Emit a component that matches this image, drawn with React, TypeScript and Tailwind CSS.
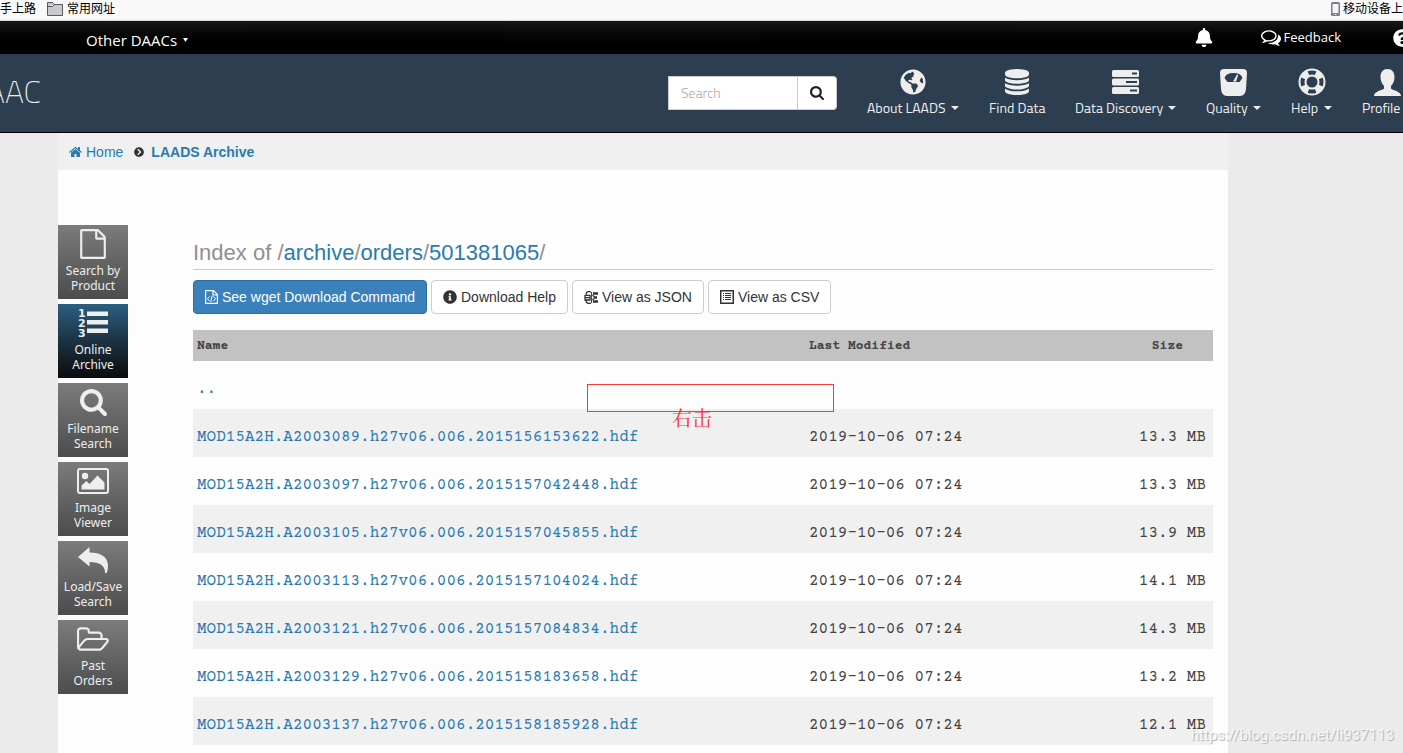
import type { ReactNode } from 'react';
import { FaBell, FaChevronCircleRight, FaGlobeAmericas, FaInfoCircle, FaQuestionCircle } from 'react-icons/fa';

const files = [
  ['MOD15A2H.A2003089.h27v06.006.2015156153622.hdf', '13.3 MB'],
  ['MOD15A2H.A2003097.h27v06.006.2015157042448.hdf', '13.3 MB'],
  ['MOD15A2H.A2003105.h27v06.006.2015157045855.hdf', '13.9 MB'],
  ['MOD15A2H.A2003113.h27v06.006.2015157104024.hdf', '14.1 MB'],
  ['MOD15A2H.A2003121.h27v06.006.2015157084834.hdf', '14.3 MB'],
  ['MOD15A2H.A2003129.h27v06.006.2015158183658.hdf', '13.2 MB'],
  ['MOD15A2H.A2003137.h27v06.006.2015158185928.hdf', '12.1 MB'],
];

const HomeIcon = () => (
  <svg viewBox="64 128 1664 1536" className="h-3 w-[13px]" fill="currentColor">
    <path d="M1472 992v480q0 26-19 45t-45 19h-384v-384h-256v384h-384q-26 0-45-19t-19-45v-480q0-1 .5-3t.5-3l575-474 575 474q1 2 1 6zm223-69l-62 74q-8 9-21 11h-3q-13 0-21-7l-692-577-692 577q-12 8-24 7-13-2-21-11l-62-74q-8-10-7-23.5t11-21.5l719-599q32-26 76-26t76 26l244 204v-195q0-14 9-23t23-9h192q14 0 23 9t9 23v408l219 182q10 8 11 21.5t-7 23.5z" />
  </svg>
);

const MagnifierIcon = ({ className }: { className: string }) => (
  <svg viewBox="64 128 1664 1664" className={className} fill="currentColor">
    <path d="M1216 832q0-185-131.5-316.5t-316.5-131.5-316.5 131.5-131.5 316.5 131.5 316.5 316.5 131.5 316.5-131.5 131.5-316.5zm512 832q0 52-38 90t-90 38q-54 0-90-38l-343-342q-179 124-399 124-143 0-273.5-55.5t-225-150-150-225-55.5-273.5 55.5-273.5 150-225 225-150 273.5-55.5 273.5 55.5 225 150 150 225 55.5 273.5q0 220-124 399l343 343q37 37 37 90z" />
  </svg>
);

const CommentsIcon = () => (
  <svg viewBox="0 256 1792 1408" className="h-4 w-5" fill="currentColor">
    <path d="M704 384q-153 0-286 52t-211.5 141-78.5 191q0 82 53 158t149 132l97 56-35 84q34-20 62-39l44-31 53 10q78 14 153 14 153 0 286-52t211.5-141 78.5-191-78.5-191-211.5-141-286-52zm0-128q191 0 353.5 68.5t256.5 186.5 94 257-94 257-256.5 186.5-353.5 68.5q-86 0-176-16-124 88-278 128-36 9-86 16h-3q-11 0-20.5-8t-11.5-21q-1-3-1-6.5t.5-6.5 2-6l2.5-5 3.5-5.5 4-5 4.5-5 4-4.5q5-6 23-25t26-29.5 22.5-29 25-38.5 20.5-44q-124-72-195-177t-71-224q0-139 94-257t256.5-186.5 353.5-68.5zm822 1169q10 24 20.5 44t25 38.5 22.5 29 26 29.5 23 25q1 1 4 4.5t4.5 5 4 5 3.5 5.5l2.5 5 2 6 .5 6.5-1 6.5q-3 14-13 22t-22 7q-50-7-86-16-154-40-278-128-90 16-176 16-271 0-472-132 58 4 88 4 161 0 309-45t264-129q125-92 192-212t67-254q0-77-23-152 129 71 204 178t75 230q0 120-71 224.5t-195 176.5z" />
  </svg>
);

const DatabaseIcon = () => (
  <svg viewBox="128 0 1536 1792" className="h-[26px] w-6" preserveAspectRatio="none" fill="currentColor">
    <path d="M896 768q237 0 443-43t325-127v170q0 69-103 128t-280 93.5-385 34.5-385-34.5-280-93.5-103-128v-170q119 84 325 127t443 43zm0 768q237 0 443-43t325-127v170q0 69-103 128t-280 93.5-385 34.5-385-34.5-280-93.5-103-128v-170q119 84 325 127t443 43zm0-384q237 0 443-43t325-127v170q0 69-103 128t-280 93.5-385 34.5-385-34.5-280-93.5-103-128v-170q119 84 325 127t443 43zm0-1152q208 0 385 34.5t280 93.5 103 128v128q0 69-103 128t-280 93.5-385 34.5-385-34.5-280-93.5-103-128v-128q0-69 103-128t280-93.5 385-34.5z" />
  </svg>
);

const TasksIcon = () => (
  <svg viewBox="0 0 27 26" className="h-[26px] w-[27px]" fill="currentColor">
    <rect y="1" width="27" height="7" rx="1.5" />
    <rect y="9.500" width="27" height="7" rx="1.500" />
    <rect y="18" width="27" height="7" rx="1.500" />
    <g fill="#2c3e50">
      <rect x="20" y="3.500" width="5" height="2" />
      <rect x="14" y="12" width="11" height="2" />
      <rect x="18" y="20.500" width="7" height="2" />
    </g>
  </svg>
);

const ScaleIcon = () => (
  <svg viewBox="0 0 27 27" className="size-[27px]">
    <path d="M4 0h19q4 0 4 4l-1 16q-.6 7-6 7H7q-5.400 0-6-7L0 4q0-4 4-4z" fill="currentColor" />
    <path d="M4.500 9Q6 4 13.500 4T22.500 9L19.500 13h-12z" fill="#2c3e50" />
    <path d="M13 12.500l4-7 1.200.6-2.200 6.400z" fill="currentColor" />
  </svg>
);

const LifeRingIcon = () => (
  <svg viewBox="0 0 28 28" className="size-7">
    <circle cx="14" cy="14" r="13.500" fill="currentColor" />
    <circle cx="14" cy="14" r="9.500" fill="none" stroke="#2c3e50" strokeWidth="4" pathLength="80" strokeDasharray="10 10" strokeDashoffset="5" />
    <circle cx="14" cy="14" r="5.500" fill="#2c3e50" />
  </svg>
);

const PersonIcon = () => (
  <svg viewBox="0 0 27 27" className="size-[27px]" fill="currentColor">
    <path d="M13.500 0C18 0 20.500 3 20.500 8c0 4-1.500 7-3.500 9v2.500c1 1.800 10 2.500 10 7.500H0c0-5 9-5.700 10-7.500V17c-2-2-3.500-5-3.500-9 0-5 2.500-8 7-8z" />
  </svg>
);

const FileIcon = () => (
  <svg viewBox="128 0 1536 1792" className="h-[30px] w-[26px]" fill="currentColor">
    <path d="M1596 380q28 28 48 76t20 88v1152q0 40-28 68t-68 28h-1344q-40 0-68-28t-28-68v-1600q0-40 28-68t68-28h896q40 0 88 20t76 48zm-444-244v376h376q-10-29-22-41l-313-313q-12-12-41-22zm384 1528v-1024h-416q-40 0-68-28t-28-68v-416h-768v1536h1280z" />
  </svg>
);

const NumberedListIcon = () => (
  <svg viewBox="0 0 32 32" className="size-8" fill="currentColor">
    <g fontFamily="'DejaVu Sans', sans-serif" fontWeight="700" fontSize="11">
      <text x="1" y="10">1</text>
      <text x="1" y="20">2</text>
      <text x="1" y="30">3</text>
    </g>
    <rect x="10" y="4.500" width="21" height="4.500" />
    <rect x="10" y="13" width="21" height="4.500" />
    <rect x="10" y="21.500" width="21" height="4.500" />
  </svg>
);

const PictureIcon = () => (
  <svg viewBox="0 0 32 26" className="h-[26px] w-8">
    <rect x="1" y="1" width="30" height="24" rx="2" fill="none" stroke="currentColor" strokeWidth="2" />
    <circle cx="8" cy="8" r="3.200" fill="currentColor" />
    <path d="M4.500 21.500v-4l5-4.500 3 3 8-8.500 7 7v7z" fill="currentColor" />
  </svg>
);

const BackArrowIcon = () => (
  <svg viewBox="0 0 30 26" className="h-[26px] w-[30px]" fill="currentColor">
    <path d="M11.500 0v5.500C23 5.500 30 10 30 19q0 3.500-1.300 7h-1.500C26.800 18.500 22 15 11.500 15v4.500L0 10z" />
  </svg>
);

const FolderOpenIcon = () => (
  <svg viewBox="64 128 1920 1408" className="h-6 w-8" fill="currentColor">
    <path d="M1845 931q0-35-53-35h-1088q-40 0-85.500 21.500t-71.500 52.500l-294 363q-18 24-18 40 0 35 53 35h1088q40 0 86-22t71-53l294-363q18-22 18-39zm-1141-163h768v-160q0-40-28-68t-68-28h-576q-40 0-68-28t-28-68v-64q0-40-28-68t-68-28h-320q-40 0-68 28t-28 68v853l256-315q44-53 116-87.500t140-34.500zm1269 163q0 62-46 120l-295 363q-43 53-116 87.500t-140 34.500h-1088q-92 0-158-66t-66-158v-960q0-92 66-158t158-66h320q92 0 158 66t66 158v32h544q92 0 158 66t66 158v160h192q54 0 99 24.500t67 70.500q15 32 15 68z" />
  </svg>
);

const CodeFileIcon = () => (
  <svg viewBox="0 0 13 14" className="h-3.5 w-[13px]" fill="none" stroke="currentColor">
    <path d="M.6.600h7.900l3.900 3.900v8.900H.6zM8 .6V5h4.400" strokeWidth="1.200" />
    <path d="M4.500 6.500l-2 2.300 2 2.300M8.500 6.500l2 2.300-2 2.300M7.200 5.800L5.800 12" />
  </svg>
);

const JsonIcon = () => (
  <svg viewBox="0 0 14 13" className="h-[13px] w-3.5" fill="none" stroke="currentColor">
    <path d="M4 .7h3M4 12.300h3M2.200 3.500Q2.200.7 4.500.7M2.200 9.500q0 2.800 2.300 2.800M1 4.300h5V9H1zM1 6.600h5" strokeWidth="1.300" />
    <path d="M7.600 1v11" strokeWidth="1" />
    <path d="M9 2.500h5M9 10.500h5M11 6.500h2" strokeWidth="2.400" />
    <path d="M8.500 4l2.500 2.500L8.500 9" strokeWidth="1.200" />
  </svg>
);

const ListIcon = () => (
  <svg viewBox="0 0 14 14" className="size-3.5" fill="none" stroke="currentColor">
    <rect x=".75" y=".75" width="12.500" height="12.500" strokeWidth="1.500" />
    <path d="M3 3.500h1M3 5.500h1M3 7.500h1M3 9.500h1M5 3.500h6M5 5.500h6M5 7.500h6M5 9.500h6" strokeWidth="1" />
  </svg>
);

const BookmarkFolderIcon = () => (
  <svg viewBox="0 0 16 14" className="h-3.5 w-4">
    <path d="M.5 13.500V.5h5l1.500 2h8.500v11zM.5 4.500h5l2-2" fill="#c9c9cd" stroke="#5a5a5e" />
  </svg>
);

const PhoneIcon = () => (
  <svg viewBox="0 0 9 14" className="h-3.5 w-[9px]">
    <rect width="9" height="14" rx="1.500" fill="#7d8186" />
    <rect x="1.500" y="2" width="6" height="9" fill="#f2f4f6" />
    <rect x="3.500" y="12" width="2" height="1" fill="#e4e4e4" />
  </svg>
);

const Caret = () => (
  <svg viewBox="0 0 8 4" className="h-1 w-2" fill="currentColor">
    <path d="M0 0h8L4 4z" />
  </svg>
);

const NavItem = ({ icon, label, width, caret = true }: { icon: ReactNode; label: string; width: string; caret?: boolean }) => (
  <a href="#" className={`flex flex-col items-center ${width}`}>
    <span className="flex h-7 items-center">{icon}</span>
    <span className="mt-0.5 flex w-full items-center justify-between whitespace-nowrap leading-5">
      {label}
      {caret && <Caret />}
    </span>
  </a>
);

const sideItems: { icon: ReactNode; lines: [string, string]; active?: boolean }[] = [
  { icon: <FileIcon />, lines: ['Search by', 'Product'] },
  { icon: <NumberedListIcon />, lines: ['Online', 'Archive'], active: true },
  { icon: <MagnifierIcon className="size-[27px]" />, lines: ['Filename', 'Search'] },
  { icon: <PictureIcon />, lines: ['Image', 'Viewer'] },
  { icon: <BackArrowIcon />, lines: ['Load/Save', 'Search'] },
  { icon: <FolderOpenIcon />, lines: ['Past', 'Orders'] },
];

const plainButton = 'flex h-[34px] items-center gap-1 rounded border border-[#ccc] bg-white px-[11px] text-[#333]';

export default function App() {
  return (
    <div className="relative flex min-h-screen flex-col overflow-hidden bg-[#ebebeb] font-['Liberation_Sans',sans-serif] text-sm text-[#333]">
      <div className="flex h-[21px] items-center justify-between overflow-hidden border-b border-[#d6d9dc] bg-[#f9f9f9] pb-[3px] font-['Liberation_Sans','Noto_Sans_CJK_SC',sans-serif] text-xs text-black">
        <div className="flex items-center">
          <span>手上路</span>
          <span className="ml-[11px] flex items-center gap-1">
            <BookmarkFolderIcon />
            常用网址
          </span>
        </div>
        <div className="flex items-center gap-[3px]">
          <PhoneIcon />
          移动设备上
        </div>
      </div>

      <div className="flex h-[33px] items-center bg-linear-to-b from-[#171717] to-black font-['Open_Sans',sans-serif] text-white">
        <a href="#" className="ml-[86px] flex items-center gap-1.5 pt-1.5 text-[15px]">
          Other DAACs
          <svg viewBox="0 0 5 4" className="h-1 w-[5px]" fill="currentColor"><path d="M0 0h5L2.500 4z" /></svg>
        </a>
        <div className="-mr-2 ml-auto flex items-center text-[13px]">
          <button type="button" aria-label="Notifications"><FaBell className="h-[19px] w-[18px]" /></button>
          <a href="#" className="ml-12 flex items-center gap-[3px]">
            <CommentsIcon />
            Feedback
          </a>
          <button type="button" aria-label="Help" className="ml-[52px]"><FaQuestionCircle className="size-[18px]" /></button>
        </div>
      </div>

      <header className="flex h-[79px] items-center border-b border-black bg-[#2c3e50] text-[#eee]">
        <span className="-ml-3.5 pb-0.5 font-['Titillium_Web','Open_Sans',sans-serif] text-[32px] font-extralight">AAC</span>
        <form className="ml-auto flex h-[34px]">
          <input aria-label="Search" placeholder="Search" className="w-[130px] border border-[#ccc] bg-white px-3 font-['Titillium_Web',Roboto,sans-serif] font-light text-[#555] placeholder:text-[#aaa]" />
          <button type="button" aria-label="Submit search" className="flex w-[39px] items-center justify-center rounded-r border border-l-0 border-[#ccc] bg-white text-[#222]">
            <MagnifierIcon className="size-3.5" />
          </button>
        </form>
        <nav className="-mr-2.5 ml-[30px] flex shrink-0 gap-[30px] font-['Titillium_Web',Roboto,sans-serif]">
          <NavItem icon={<FaGlobeAmericas className="size-[26px]" />} label="About LAADS" width="w-[92px]" />
          <NavItem icon={<DatabaseIcon />} label="Find Data" width="w-14" caret={false} />
          <NavItem icon={<TasksIcon />} label="Data Discovery" width="w-[101px]" />
          <NavItem icon={<ScaleIcon />} label="Quality" width="w-[55px]" />
          <NavItem icon={<LifeRingIcon />} label="Help" width="w-[41px]" />
          <NavItem icon={<PersonIcon />} label="Profile" width="w-[51px]" />
        </nav>
      </header>

      <div className="ml-[58px] mr-[175px] flex grow flex-col bg-[#fdfdfd]">
        <div className="flex h-[37px] items-center bg-[#f0f0f0] px-[11px] text-[#2a7ab0]">
          <a href="#" className="flex items-center gap-1"><HomeIcon />Home</a>
          <FaChevronCircleRight className="ml-[11px] mr-[7px] size-2.5 text-[#333]" />
          <a href="#" className="font-bold">LAADS Archive</a>
        </div>

        <div className="flex items-start gap-[65px] pr-[15px] pt-[55px]">
          <nav className="flex w-[70px] shrink-0 flex-col gap-[5px] font-['Noto_Sans',sans-serif] text-xs leading-[15px] text-[#eee]">
            {sideItems.map(({ icon, lines, active }) => (
              <a
                key={lines.join(' ')}
                href="#"
                className={`flex h-[74px] flex-col items-center text-center bg-linear-to-b ${active ? 'from-[#2b5f80] to-[#0a0c0e]' : 'from-[#7c7c7c] to-[#4c4c4c]'}`}
              >
                <span className="flex h-[38px] items-center">{icon}</span>
                <span>{lines[0]}</span>
                <span>{lines[1]}</span>
              </a>
            ))}
          </nav>

          <main className="relative min-w-0 grow pt-3.5">
            <h1 className="border-b border-[#ccc] pb-0.5 text-[22px] leading-7 text-[#909090]">
              Index of /<a href="#" className="text-[#2a7ab0]">archive</a>/<a href="#" className="text-[#2a7ab0]">orders</a>/<a href="#" className="text-[#2a7ab0]">501381065</a>/
            </h1>
            <div className="mt-2.5 flex gap-1">
              <button type="button" className="flex h-[34px] items-center gap-1 rounded border border-[#2e6da4] bg-[#3a80bb] px-[11px] text-white">
                <CodeFileIcon />See wget Download Command
              </button>
              <button type="button" className={plainButton}><FaInfoCircle className="size-3.5" />Download Help</button>
              <button type="button" className={plainButton}><JsonIcon />View as JSON</button>
              <button type="button" className={plainButton}><ListIcon />View as CSV</button>
            </div>

            <table className="mt-4 w-full table-fixed font-['Courier_Prime','Liberation_Mono',monospace] text-base text-[#444]">
              <thead>
                <tr className="h-[31px] bg-[#c2c2c2] text-[13px]">
                  <th className="w-3/5 px-1 pt-0.5 text-left">Name</th>
                  <th className="w-1/4 px-1 pt-0.5 text-left">Last Modified</th>
                  <th className="pr-[30px] pt-0.5 text-right">Size</th>
                </tr>
              </thead>
              <tbody>
                <tr className="h-12">
                  <td className="px-1 pt-2"><a href="#" className="text-[#2a7ab0]">..</a></td>
                  <td />
                  <td />
                </tr>
                {files.map(([name, size]) => (
                  <tr key={name} className="h-12 odd:bg-[#fdfdfd] even:bg-[#f0f0f0]">
                    <td className="px-1 pt-2"><a href="#" className="text-[#2a7ab0]">{name}</a></td>
                    <td className="px-1 pt-2">2019-10-06 07:24</td>
                    <td className="pr-[7px] pt-2 text-right">{size}</td>
                  </tr>
                ))}
              </tbody>
            </table>

            <div className="absolute left-[394px] top-[159px] h-7 w-[247px] border border-[#f83a3a]" />
            <div className="absolute left-[479px] top-[181px] font-['Noto_Serif_CJK_SC','Noto_Sans_CJK_SC',serif] text-xl leading-6 text-[#fb3232]">右击</div>
          </main>
        </div>
      </div>

      <div className="absolute bottom-2 right-[9px] font-[Roboto,sans-serif] text-[15px] leading-5 text-white/80 [text-shadow:1px_1px_1px_#aaa]">
        https://blog.csdn.net/li937113
      </div>
    </div>
  );
}
